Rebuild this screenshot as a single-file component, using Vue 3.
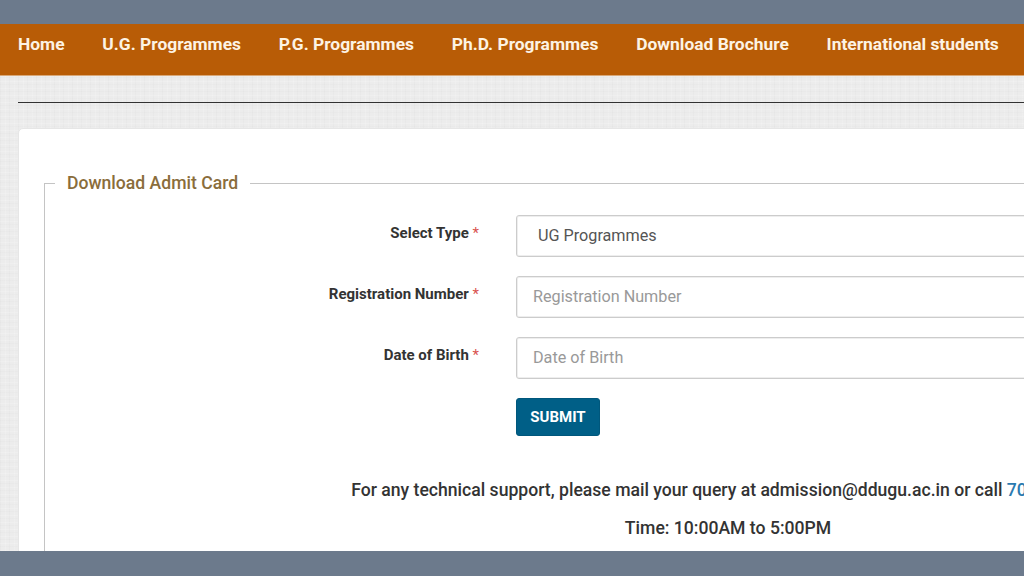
<script setup>
const navItems = ['Home', 'U.G. Programmes', 'P.G. Programmes', 'Ph.D. Programmes', 'Download Brochure', 'International students']
</script>

<template>
  <div class="frame">
    <div class="band"></div>
    <nav class="nav">
      <a v-for="item in navItems" :key="item" class="nav-link" href="#">{{ item }}</a>
    </nav>
    <main class="main">
      <div class="sheet">
        <hr class="rule" />
        <section class="card">
          <fieldset class="fields">
            <legend class="legend">Download Admit Card</legend>
            <form class="form" @submit.prevent>
              <label class="label" for="type">Select Type <span class="star">*</span></label>
              <select id="type" class="control select">
                <option>UG Programmes</option>
              </select>
              <label class="label" for="reg">Registration Number <span class="star">*</span></label>
              <input id="reg" class="control" type="text" placeholder="Registration Number" />
              <label class="label" for="dob">Date of Birth <span class="star">*</span></label>
              <input id="dob" class="control" type="text" placeholder="Date of Birth" />
              <span></span>
              <div><button class="submit" type="submit">SUBMIT</button></div>
            </form>
            <p class="note first">For any technical support, please mail your query at admission@ddugu.ac.in or call <a class="phone" href="#">70</a></p>
            <p class="note">Time: 10:00AM to 5:00PM</p>
          </fieldset>
        </section>
      </div>
    </main>
    <div class="band bottom"></div>
  </div>
</template>

<style>
html, body { margin: 0; overflow: hidden; }
</style>

<style scoped>
.frame {
  width: 1024px;
  height: 576px;
  display: flex;
  flex-direction: column;
  overflow: hidden;
  font-family: Roboto, "Liberation Sans", sans-serif;
}
.band { height: 24px; flex: none; background: #6c7a8c; }
.band.bottom { height: 25px; }
.nav {
  flex: none;
  height: 52px;
  box-sizing: border-box;
  padding: 0 0 12px 18px;
  display: flex;
  align-items: center;
  gap: 37.8px;
  background: #b85c06;
  border-bottom: 1px solid #d9a878;
}
.nav-link {
  color: #fdf3e4;
  font-size: 17.4px;
  font-weight: 700;
  text-decoration: none;
  white-space: nowrap;
}
.main {
  flex: 1;
  min-height: 0;
  overflow: hidden;
  background-color: #ececec;
  background-image:
    repeating-linear-gradient(0deg, rgba(255,255,255,.16) 0 1px, transparent 1px 4px, rgba(0,0,0,.012) 4px 5px, transparent 5px 7px),
    repeating-linear-gradient(90deg, rgba(0,0,0,.014) 0 1px, transparent 1px 5px, rgba(255,255,255,.14) 5px 6px, transparent 6px 9px);
}
.sheet { width: 1460px; padding: 26px 0 0 18px; box-sizing: border-box; }
.rule { margin: 0 0 25px; border: 0; border-top: 1px solid #333; box-shadow: 0 -2px 0 -1px #f8f8f8; }
.card {
  padding: 44px 25px 40px;
  width: 1420px;
  box-sizing: border-box;
  background: #fff;
  border: 1px solid #e6e6e6;
  border-radius: 5px;
}
.fields {
  margin: 0;
  padding: 0 0 20px;
  border: 1px solid #c4c4c4;
  min-width: 0;
}
.legend {
  margin-left: 10px;
  padding: 0 12px;
  color: #8a6d3b;
  font-size: 17.6px;
  font-weight: 500;
  line-height: 20px;
}
.form {
  display: grid;
  grid-template-columns: 434px 800px;
  column-gap: 37px;
  row-gap: 19px;
  margin-top: 22px;
}
.label {
  justify-self: end;
  margin-top: 8px;
  color: #333;
  font-size: 15px;
  font-weight: 700;
  line-height: 20px;
}
.star { color: #d9534f; font-weight: 400; }
.control {
  box-sizing: border-box;
  width: 100%;
  height: 42px;
  padding: 0 16px 1px;
  background: #fff;
  border: 1px solid #ccc;
  border-radius: 3px;
  box-shadow: inset 0 0 0 1px #eee;
  color: #555;
  font: 400 16.2px Roboto, "Liberation Sans", sans-serif;
}
.control::placeholder { color: #999; opacity: 1; }
.select { appearance: none; padding-left: 21px; }
.submit {
  width: 84px;
  height: 38px;
  padding: 0;
  background: #005f87;
  border: 1px solid #00577c;
  border-radius: 3px;
  color: #fff;
  font: 700 15px Roboto, "Liberation Sans", sans-serif;
}
.note {
  margin: 0;
  color: #333;
  font-size: 17.6px;
  font-weight: 500;
  line-height: 20px;
  text-align: center;
}
.note.first { margin: 44px 0 18px; }
.phone {
  display: inline-block;
  min-width: 98px;
  color: #2a7ab0;
  text-decoration: none;
  text-align: left;
}
</style>
